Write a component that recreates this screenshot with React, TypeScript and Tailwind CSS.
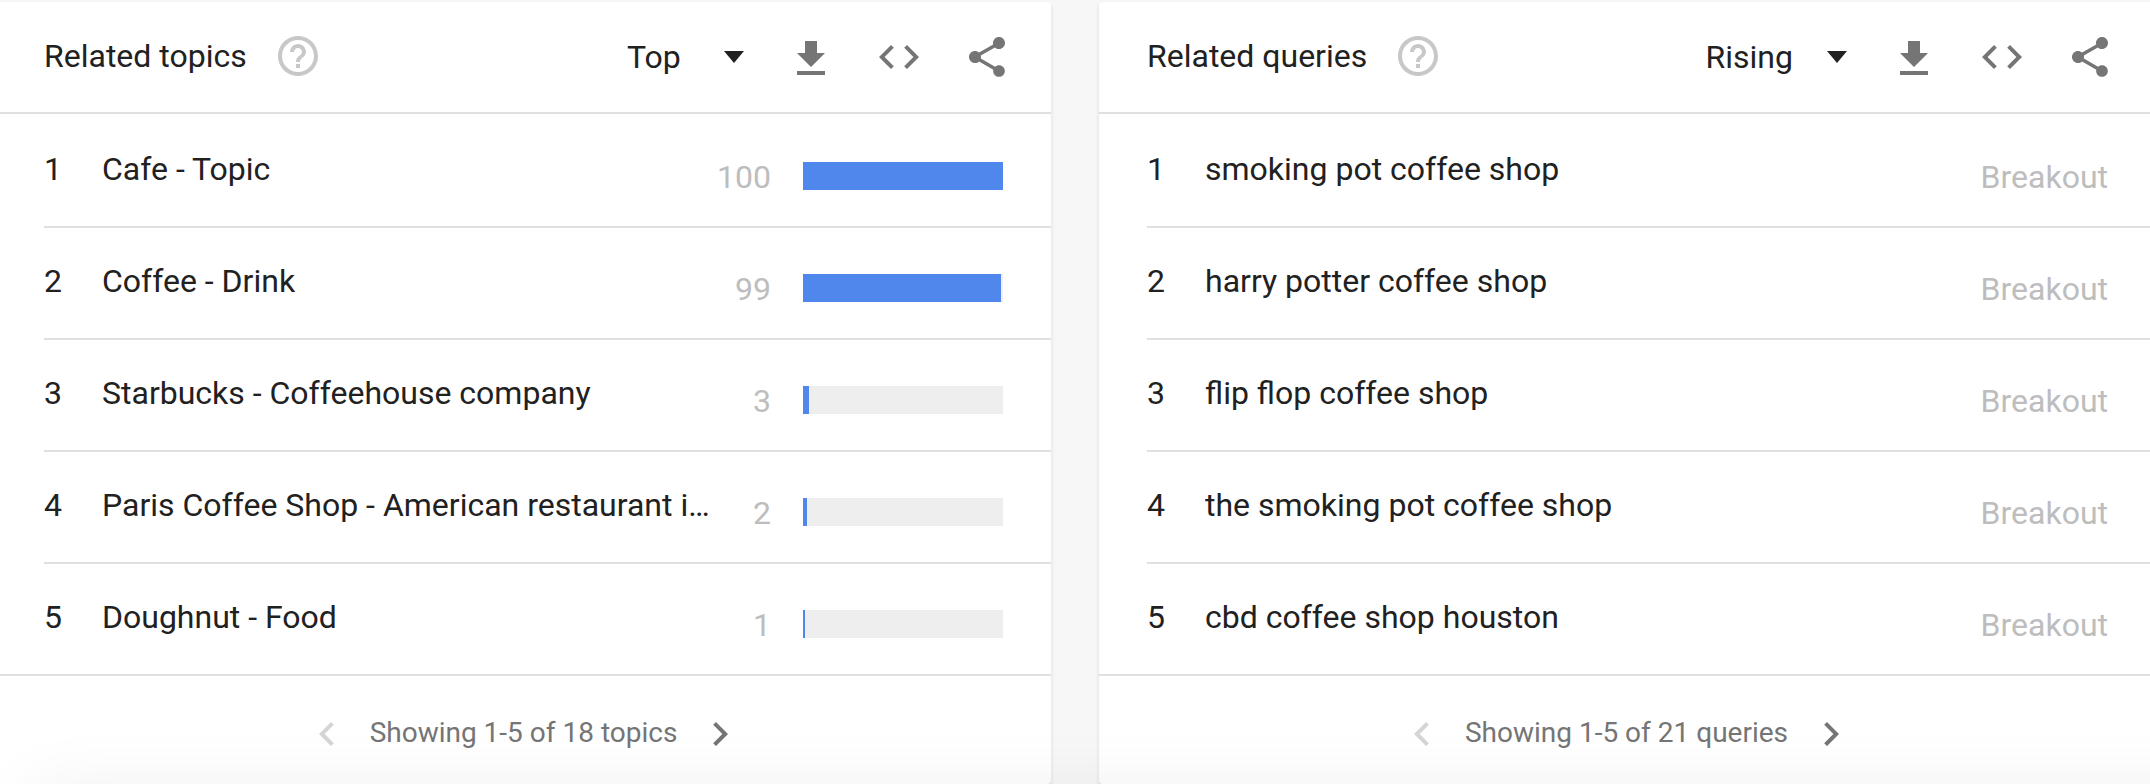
import type { ReactNode } from "react";

type Item = { label: string; value: string; percent?: number };

type WidgetProps = {
  title: string;
  sort: "Top" | "Rising";
  items: Item[];
  total: number;
  noun: string;
};

const topics: Item[] = [
  { label: "Cafe - Topic", value: "100", percent: 100 },
  { label: "Coffee - Drink", value: "99", percent: 99 },
  { label: "Starbucks - Coffeehouse company", value: "3", percent: 3 },
  { label: "Paris Coffee Shop - American restaurant i…", value: "2", percent: 2 },
  { label: "Doughnut - Food", value: "1", percent: 1 },
];

const queries: Item[] = [
  { label: "smoking pot coffee shop", value: "Breakout" },
  { label: "harry potter coffee shop", value: "Breakout" },
  { label: "flip flop coffee shop", value: "Breakout" },
  { label: "the smoking pot coffee shop", value: "Breakout" },
  { label: "cbd coffee shop houston", value: "Breakout" },
];

function Icon({ d, viewBox = "0 0 24 24" }: { d: string; viewBox?: string }) {
  return (
    <svg viewBox={viewBox} className="size-12 fill-current" aria-hidden="true">
      <path d={d} />
    </svg>
  );
}

function IconButton({ label, disabled, className = "text-[#757575]", children }: {
  label: string;
  disabled?: boolean;
  className?: string;
  children: ReactNode;
}) {
  return (
    <button type="button" aria-label={label} disabled={disabled} className={`shrink-0 ${className}`}>
      {children}
    </button>
  );
}

function SortSelect({ value, label }: { value: string; label: string }) {
  return (
    <div className="mr-[3px] grid items-center">
      <select
        aria-label={label}
        defaultValue={value}
        className="col-start-1 row-start-1 h-10 min-w-[117px] appearance-none bg-transparent pr-[54px] pb-0.5 leading-10 field-sizing-content"
      >
        <option>Top</option>
        <option>Rising</option>
      </select>
      <svg
        viewBox="0 0 20 12"
        aria-hidden="true"
        className="pointer-events-none col-start-1 row-start-1 h-3 w-5 justify-self-end fill-current"
      >
        <path d="M0 0h20L10 12z" />
      </svg>
    </div>
  );
}

function Bar({ percent }: { percent: number }) {
  return (
    <div className="mt-[13px] mr-0.5 ml-8 h-7 w-50 shrink-0 bg-[#eeeeee]">
      <div className="h-full bg-[#5087ec]" style={{ width: `${percent}%` }} />
    </div>
  );
}

function Widget({ title, sort, items, total, noun }: WidgetProps) {
  return (
    <section className="min-w-0 flex-1 rounded bg-white shadow-[0_2px_4px_rgba(0,0,0,0.12)]">
      <header className="flex h-28 items-center justify-between border-b-2 border-[#e0e0e0] pr-10 pl-12">
        <div className="flex items-center gap-[27px] pb-[3px]">
          <h2>{title}</h2>
          <IconButton label={`Help for ${title}`} className="text-[#c8c8c8]">
            <Icon d="M11 18h2v-2h-2v2zm1-16C6.480 2 2 6.480 2 12s4.480 10 10 10 10-4.480 10-10S17.520 2 12 2zm0 18c-4.410 0-8-3.590-8-8s3.590-8 8-8 8 3.590 8 8-3.590 8-8 8zm0-14c-2.210 0-4 1.790-4 4h2c0-1.100.9-2 2-2s2 .9 2 2c0 2-3 1.750-3 5h2c0-2.250 3-2.500 3-5 0-2.210-1.790-4-4-4z" />
          </IconButton>
        </div>
        <div className="flex items-center gap-10">
          <SortSelect value={sort} label={`Sort ${title}`} />
          <IconButton label="Download CSV">
            <Icon viewBox="0 -1 24 24" d="M19 9h-4V3H9v6H5l7 7 7-7zM5 18v2h14v-2H5z" />
          </IconButton>
          <IconButton label="Embed">
            <Icon d="M9.400 16.600 4.800 12l4.600-4.600L8 6l-6 6 6 6 1.400-1.400zm5.200 0 4.600-4.600-4.600-4.600L16 6l6 6-6 6-1.400-1.400z" />
          </IconButton>
          <IconButton label="Share">
            <Icon d="M18 16.080c-.76 0-1.440.3-1.960.77L8.910 12.700c.05-.23.09-.46.09-.7s-.04-.47-.09-.7l7.050-4.110c.54.5 1.250.81 2.040.81 1.660 0 3-1.340 3-3s-1.340-3-3-3-3 1.340-3 3c0 .24.04.47.09.7L8.040 9.810C7.500 9.310 6.790 9 6 9c-1.660 0-3 1.340-3 3s1.340 3 3 3c.79 0 1.500-.31 2.040-.81l7.120 4.160c-.05.21-.08.43-.08.65 0 1.610 1.310 2.920 2.920 2.920s2.920-1.310 2.920-2.920-1.310-2.920-2.920-2.920z" />
          </IconButton>
        </div>
      </header>

      <ol className="border-b-2 border-[#e0e0e0] pt-0.5">
        {items.map((item, i) => (
          <li
            key={item.label}
            className="ml-12 flex h-28 items-start border-b-2 border-[#e0e0e0] pt-[33px] pr-[46px] last:h-[110px] last:border-b-0"
          >
            <span className="w-[58px] shrink-0">{i + 1}</span>
            <a href="#" className="min-w-0 flex-1 truncate">
              {item.label}
            </a>
            <span className="mt-2 min-w-15 shrink-0 text-right text-[#bdbdbd]">{item.value}</span>
            {item.percent !== undefined && <Bar percent={item.percent} />}
          </li>
        ))}
      </ol>

      <footer className="flex h-27 items-center justify-center gap-[19px] pt-2 text-[28px] text-[#757575]">
        <IconButton label="Previous" disabled className="text-[#d5d5d5]">
          <Icon d="M15.410 7.410 14 6l-6 6 6 6 1.410-1.410L10.830 12z" />
        </IconButton>
        <p className="pb-0.5">
          Showing 1-5 of {total} {noun}
        </p>
        <IconButton label="Next">
          <Icon d="M10 6 8.590 7.410 13.170 12l-4.580 4.590L10 18l6-6z" />
        </IconButton>
      </footer>
    </section>
  );
}

export default function App() {
  return (
    <div className="relative min-h-screen overflow-hidden bg-[#f7f7f7] pt-0.5 font-['Roboto',sans-serif] text-[32px] leading-10 text-[#212121]">
      <main className="-mx-1 flex gap-12">
        <Widget title="Related topics" sort="Top" items={topics} total={18} noun="topics" />
        <Widget title="Related queries" sort="Rising" items={queries} total={21} noun="queries" />
      </main>
      {/* Soft shadow rising from the panel below the widgets */}
      <div className="pointer-events-none absolute -right-20 -bottom-24 left-10 h-20 shadow-[0_0_72px_8px_rgba(0,0,0,0.07)]" />
    </div>
  );
}
